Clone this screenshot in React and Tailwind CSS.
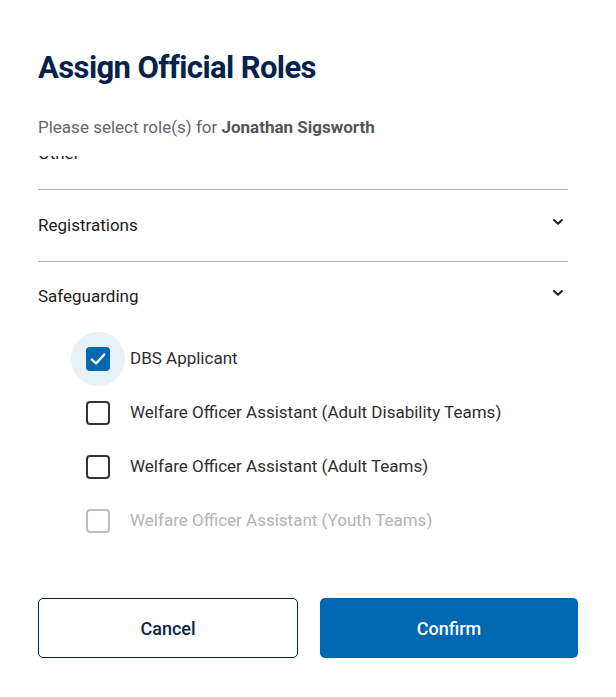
import { useState } from 'react';

const font = { fontFamily: 'Roboto, "Liberation Sans", sans-serif' };

function Chevron() {
  return (
    <svg width="12" height="8" viewBox="0 0 12 8" fill="none">
      <path d="M2 2 L6 5.8 L10 2" stroke="#1f1f1f" strokeWidth="2" strokeLinecap="round" strokeLinejoin="round" />
    </svg>
  );
}

function SectionHeader({ title, chevron = true, border = true, tall = true }) {
  return (
    <div className={`${tall ? 'h-[72px]' : 'h-[70px]'} flex items-center justify-between ${border ? 'border-b border-[#b0b0b0]' : ''}`}>
      <span className="text-[17px] text-[#1c1c1c]">{title}</span>
      {chevron && <span className="mr-[4px] -mt-[8px]"><Chevron /></span>}
    </div>
  );
}

function RoleRow({ label, checked, disabled, focused, onToggle }) {
  return (
    <div className="h-[54px] flex items-center pl-[48px]">
      <div className="relative w-[24px] h-[24px] shrink-0">
        {focused && <div className="absolute -left-[15px] -top-[15px] w-[54px] h-[54px] rounded-full bg-[#e9f1f8]" />}
        <button
          onClick={onToggle}
          disabled={disabled}
          className={`relative w-[24px] h-[24px] rounded-[4px] flex items-center justify-center ${
            checked
              ? 'bg-[#0067b1]'
              : disabled
              ? 'border-2 border-[#bdbdbd] bg-white'
              : 'border-2 border-[#333] bg-white'
          }`}
        >
          {checked && (
            <svg width="18" height="18" viewBox="0 0 18 18" fill="none">
              <path d="M2.8 9.5 L7 13.5 L15.2 4.5" stroke="white" strokeWidth="2.4" strokeLinecap="round" strokeLinejoin="round" />
            </svg>
          )}
        </button>
      </div>
      <span className={`ml-[20px] text-[17px] ${disabled ? 'text-[#b3b3b3]' : 'text-[#2e2e2e]'}`}>{label}</span>
    </div>
  );
}

export default function App() {
  const [roles, setRoles] = useState({ dbs: true, disability: false, adult: false, youth: false });
  const toggle = (k) => setRoles((r) => ({ ...r, [k]: !r[k] }));

  return (
    <div className="w-full h-[697px] bg-white px-[38px] pt-[48px] overflow-hidden" style={font}>
      <h1 className="text-[31px] leading-[40px] font-bold text-[#05234a] tracking-[-0.6px]">Assign Official Roles</h1>
      <p className="mt-[28px] text-[17px] leading-[22px] text-[#666]">
        Please select role(s) for <span className="font-bold text-[#555]">Jonathan Sigsworth</span>
      </p>

      {/* role list, scrolled a little past "Other" */}
      <div className="mt-[18px] h-[405px] overflow-hidden pr-[10px] flex flex-col">
        <div className="-mt-[38px] shrink-0">
          <SectionHeader title="Other" chevron={false} />
          <SectionHeader title="Registrations" />
          <SectionHeader title="Safeguarding" border={false} tall={false} />
          <RoleRow label="DBS Applicant" checked={roles.dbs} focused onToggle={() => toggle('dbs')} />
          <RoleRow label="Welfare Officer Assistant (Adult Disability Teams)" checked={roles.disability} onToggle={() => toggle('disability')} />
          <RoleRow label="Welfare Officer Assistant (Adult Teams)" checked={roles.adult} onToggle={() => toggle('adult')} />
          <RoleRow label="Welfare Officer Assistant (Youth Teams)" checked={roles.youth} disabled />
        </div>
      </div>

      <div className="mt-[37px] flex gap-[22px]">
        <button className="flex-1 h-[60px] rounded-[5px] border border-[#0b2545] text-[#0b2545] text-[18px] font-medium bg-white">
          Cancel
        </button>
        <button className="flex-1 h-[60px] rounded-[5px] bg-[#0067b1] text-white text-[18px] font-medium">
          Confirm
        </button>
      </div>
    </div>
  );
}
